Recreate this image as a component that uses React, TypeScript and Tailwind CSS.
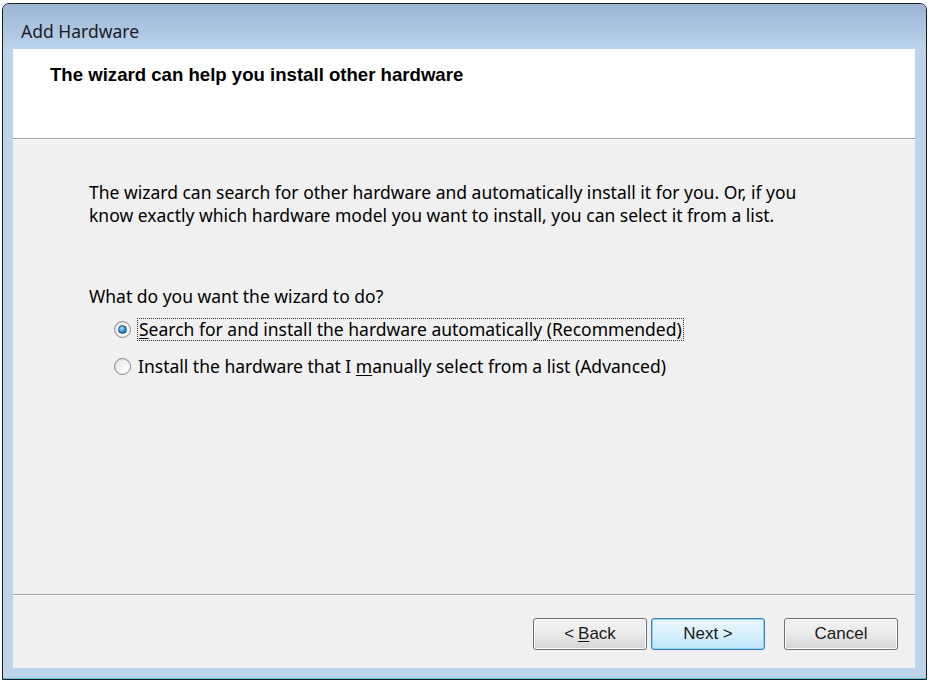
import React from "react";

const ui = { fontFamily: '"Noto Sans", "Open Sans", sans-serif' };
const btn = { fontFamily: '"Liberation Sans", Arial, sans-serif' };

function Radio({ checked }: { checked?: boolean }) {
  return (
    <span className="flex h-[17px] w-[17px] shrink-0 items-center justify-center rounded-full border border-[#8b8b8b] bg-linear-to-br from-[#d9d9d9] to-[#fafafa]">
      <span className="flex h-[13px] w-[13px] items-center justify-center rounded-full bg-linear-to-br from-[#e9e9e9] to-[#ffffff]">
        {checked && (
          <span className="h-[9px] w-[9px] rounded-full border border-[#1d4f7c] bg-[radial-gradient(circle_at_40%_35%,#a6e6fb,#2a8fd0_55%,#0f4d86)]" />
        )}
      </span>
    </span>
  );
}

function Button({ children, def }: { children: React.ReactNode; def?: boolean }) {
  return (
    <button
      style={btn}
      className={
        def
          ? "flex h-[32px] w-[114px] items-center justify-center rounded-[3px] border border-[#3c7fb1] bg-linear-to-b from-[#eaf6fd] via-[#d9f0fc] to-[#bee6fd] text-[17px] text-[#1a1a1a] shadow-[inset_0_0_0_1px_#90d4f5]"
          : "flex h-[32px] w-[114px] items-center justify-center rounded-[3px] border border-[#707070] bg-linear-to-b from-[#f2f2f2] via-[#ebebeb] to-[#d3d3d3] text-[17px] text-[#1a1a1a] shadow-[inset_0_0_0_1px_#fcfcfc]"
      }
    >
      {children}
    </button>
  );
}

export default function App() {
  return (
    <div className="h-[682px] w-[929px] bg-white pl-[2px] pt-[3px]">
      <div className="flex h-[677px] w-[925px] flex-col rounded-t-[7px] border border-[#1b1b1b] bg-[#bcd3ea]">
        <div className="flex h-[45px] shrink-0 items-center rounded-t-[6px] bg-linear-to-b from-[#9bb4d2] to-[#bbd3ec] pl-[18px] pt-[9px]">
          <span style={ui} className="text-[17.5px] text-[#1c1c28]">Add Hardware</span>
        </div>

        <div className="ml-[10px] mr-[11px] flex flex-1 flex-col bg-[#f0f0f0]">
          <div className="h-[89px] bg-white pl-[37px] pt-[15px]">
            <h1 style={btn} className="text-[18.6px] font-bold leading-[22px] text-black">
              The wizard can help you install other hardware
            </h1>
          </div>
          <div className="h-px bg-[#a0a0a0]" />
          <div className="h-px bg-white" />

          <div style={ui} className="flex-1 pl-[76px] pt-[41px] text-[17.5px] leading-[23px] text-black">
            <p>
              The wizard can search for other hardware and automatically install it for you. Or, if you
              <br />
              know exactly which hardware model you want to install, you can select it from a list.
            </p>
            <p className="mt-[58px]">What do you want the wizard to do?</p>
            <div className="mt-[3px] flex h-[37px] items-center gap-[6px] pl-[25px]">
              <Radio checked />
              <span className="border border-dotted border-[#303030] px-[1px] leading-[21px]">
                <span className="underline underline-offset-2">S</span>earch for and install the hardware automatically (Recommended)
              </span>
            </div>
            <div className="flex h-[37px] items-center gap-[7px] pl-[25px]">
              <Radio />
              <span>
                Install the hardware that I <span className="underline underline-offset-2">m</span>anually select from a list (Advanced)
              </span>
            </div>
          </div>

          <div className="h-px bg-[#a0a0a0]" />
          <div className="h-px bg-white" />
          <div className="flex h-[72px] items-start justify-end pr-[17px] pt-[22px]">
            <Button>
              &lt; <span className="ml-[4px] underline underline-offset-2">B</span>ack
            </Button>
            <div className="ml-[4px]">
              <Button def>Next &gt;</Button>
            </div>
            <div className="ml-[19px]">
              <Button>Cancel</Button>
            </div>
          </div>
        </div>
        <div className="h-[11px] shrink-0 border-b border-[#5bc3d6]" />
      </div>
    </div>
  );
}
